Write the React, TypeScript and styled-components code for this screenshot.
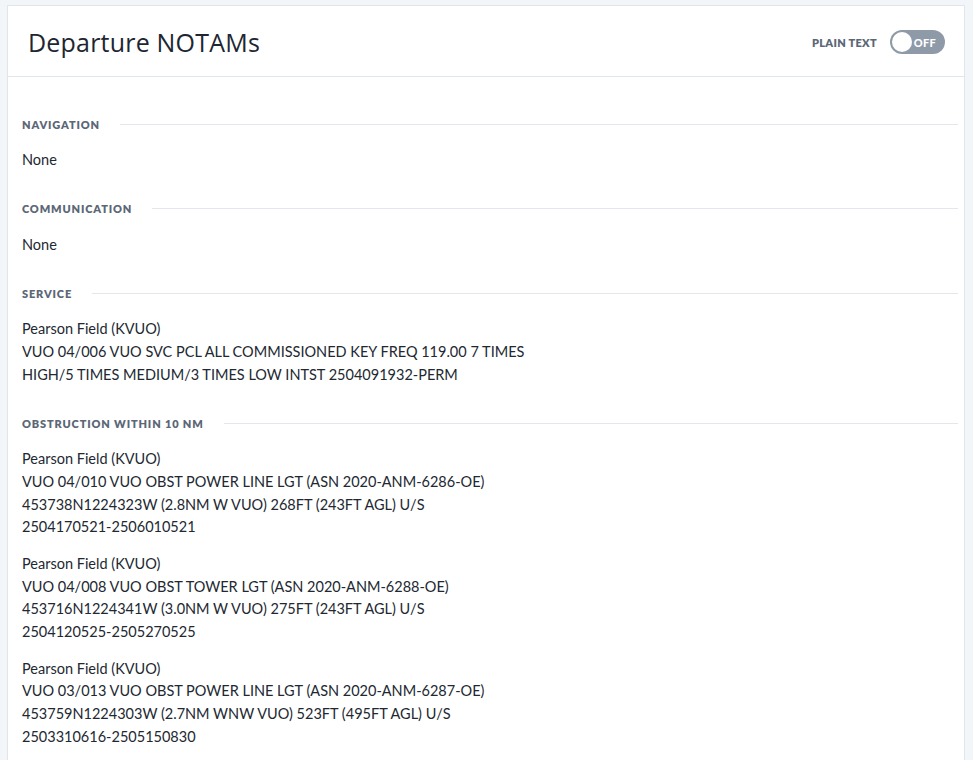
import React from "react";
import styled, { createGlobalStyle } from "styled-components";

const Global = createGlobalStyle`
  html, body { margin: 0; padding: 0; background: #f3f6f9; }
  body { font-family: Lato, "Open Sans", sans-serif; }
`;

const Page = styled.div`
  padding: 5px 8px 0 7px;
  height: 760px;
  box-sizing: border-box;
  overflow: hidden;
`;

const Card = styled.div`
  background: #fff;
  border: 1px solid #e1e6ec;
  border-bottom: none;
  min-height: 800px;
`;

const Header = styled.div`
  display: flex;
  align-items: center;
  justify-content: space-between;
  height: 70px;
  padding: 0 19px 0 20px;
  border-bottom: 1px solid #e1e6ec;
`;

const Title = styled.h1`
  margin: 2px 0 0;
  font-family: "Open Sans", sans-serif;
  font-weight: 400;
  font-size: 25px;
  color: #1e2631;
  letter-spacing: 0.2px;
`;

const ToggleGroup = styled.div`
  display: flex;
  align-items: center;
  gap: 13px;
  margin-top: 2px;
`;

const Label = styled.span`
  font-size: 11px;
  font-weight: 800;
  color: #5b6776;
  letter-spacing: 0.3px;
`;

const Switch = styled.div`
  display: flex;
  align-items: center;
  justify-content: space-between;
  width: 55px;
  height: 24px;
  box-sizing: border-box;
  padding: 0 9px 0 2px;
  border-radius: 12px;
  background: #8f9aa8;
`;

const Knob = styled.span`
  width: 20px;
  height: 20px;
  border-radius: 50%;
  background: #fff;
`;

const SwitchText = styled.span`
  font-size: 11px;
  font-weight: 900;
  color: #fff;
  letter-spacing: 0.3px;
`;

const Body = styled.div`
  padding: 39px 6px 0 14px;
  display: flex;
  flex-direction: column;
  gap: 29px;
`;

const Section = styled.section`
  display: flex;
  flex-direction: column;
  gap: 17px;
`;

const Heading = styled.div`
  display: flex;
  align-items: center;
  gap: 20px;
  height: 16px;
  font-size: 11px;
  font-weight: 800;
  color: #5b6776;
  letter-spacing: 0.85px;
  text-transform: uppercase;
  &::after {
    content: "";
    flex: 1;
    height: 1px;
    background: #e3e7ec;
  }
`;

const Items = styled.div`
  display: flex;
  flex-direction: column;
  gap: 14px;
`;

const Item = styled.div`
  font-size: 14.5px;
  line-height: 22.67px;
  color: #222831;
  white-space: pre-line;
`;

const sections: { title: string; items: string[] }[] = [
  { title: "Navigation", items: ["None"] },
  { title: "Communication", items: ["None"] },
  {
    title: "Service",
    items: [
      "Pearson Field (KVUO)\nVUO 04/006 VUO SVC PCL ALL COMMISSIONED KEY FREQ 119.00 7 TIMES\nHIGH/5 TIMES MEDIUM/3 TIMES LOW INTST 2504091932-PERM",
    ],
  },
  {
    title: "Obstruction within 10 NM",
    items: [
      "Pearson Field (KVUO)\nVUO 04/010 VUO OBST POWER LINE LGT (ASN 2020-ANM-6286-OE)\n453738N1224323W (2.8NM W VUO) 268FT (243FT AGL) U/S\n2504170521-2506010521",
      "Pearson Field (KVUO)\nVUO 04/008 VUO OBST TOWER LGT (ASN 2020-ANM-6288-OE)\n453716N1224341W (3.0NM W VUO) 275FT (243FT AGL) U/S\n2504120525-2505270525",
      "Pearson Field (KVUO)\nVUO 03/013 VUO OBST POWER LINE LGT (ASN 2020-ANM-6287-OE)\n453759N1224303W (2.7NM WNW VUO) 523FT (495FT AGL) U/S\n2503310616-2505150830",
    ],
  },
];

export default function App() {
  return (
    <Page>
      <Global />
      <Card>
        <Header>
          <Title>Departure NOTAMs</Title>
          <ToggleGroup>
            <Label>PLAIN TEXT</Label>
            <Switch>
              <Knob />
              <SwitchText>OFF</SwitchText>
            </Switch>
          </ToggleGroup>
        </Header>
        <Body>
          {sections.map((s) => (
            <Section key={s.title}>
              <Heading>{s.title}</Heading>
              <Items>
                {s.items.map((it, i) => (
                  <Item key={i}>{it}</Item>
                ))}
              </Items>
            </Section>
          ))}
        </Body>
      </Card>
    </Page>
  );
}
